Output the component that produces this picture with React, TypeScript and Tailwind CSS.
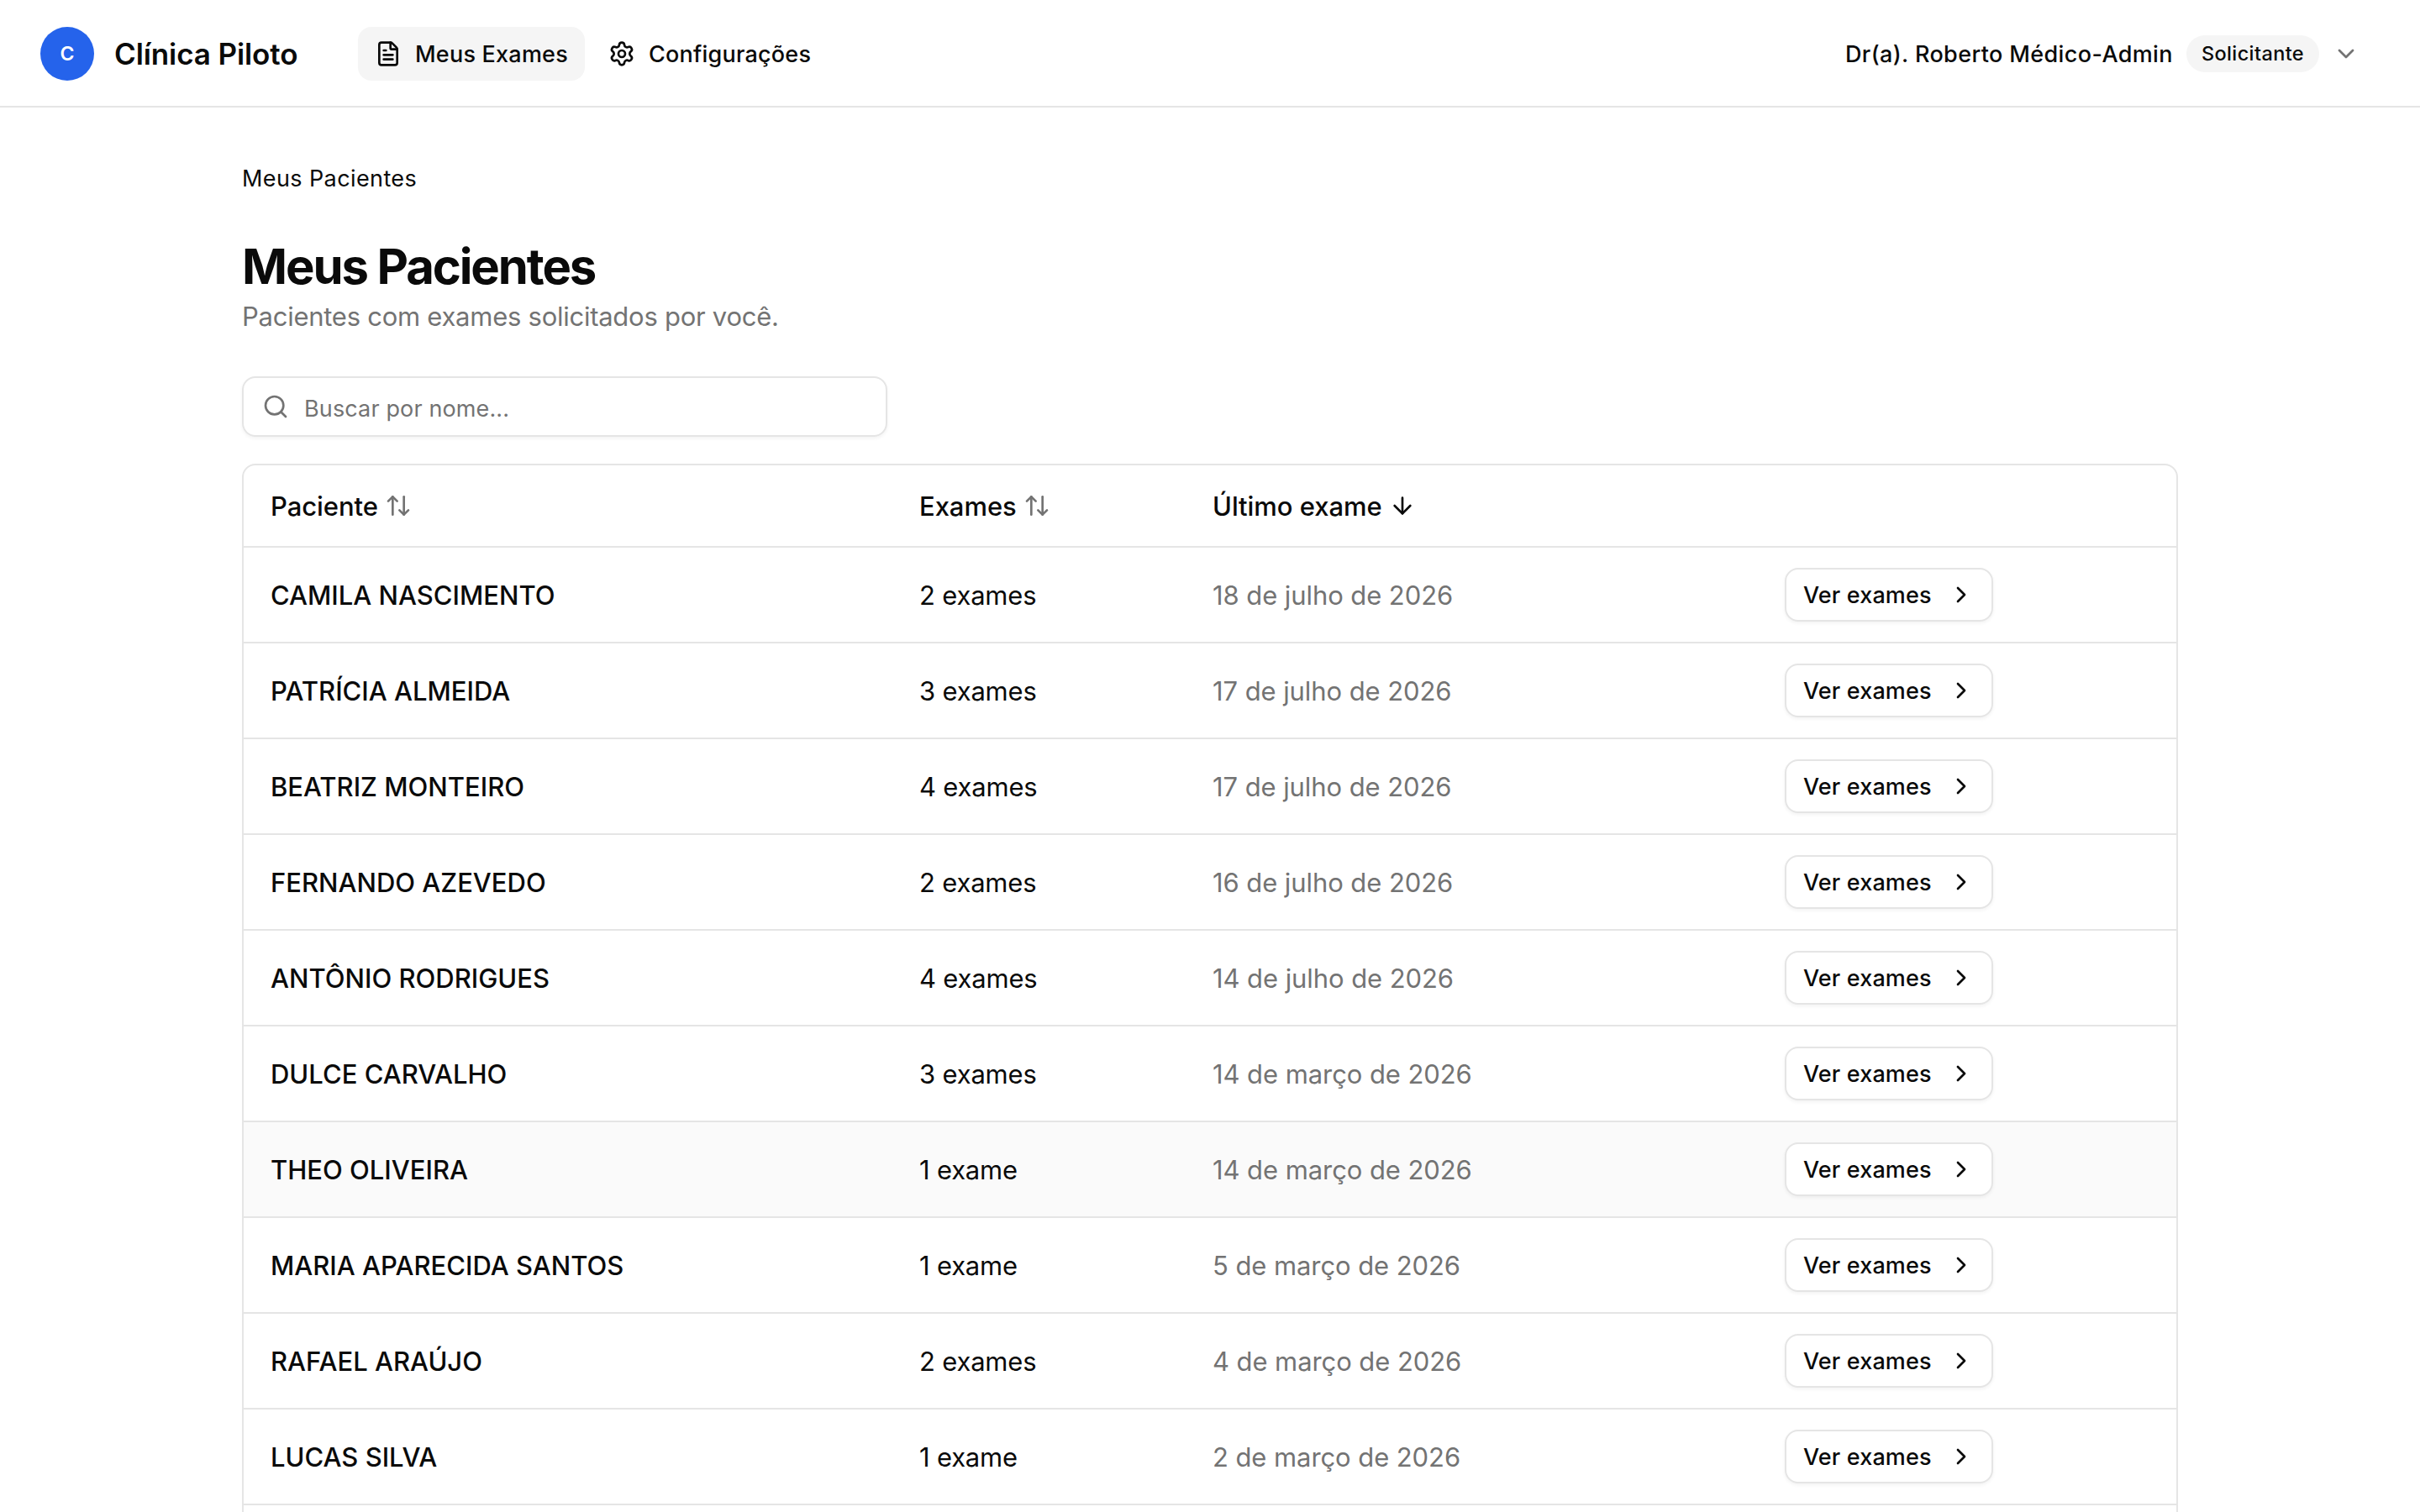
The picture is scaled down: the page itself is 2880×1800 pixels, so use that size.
import type React from "react"
import { ArrowDown, ArrowUpDown, ChevronDown, ChevronRight, FileText, Search, Settings } from "lucide-react"

interface Patient {
  name: string
  exams: number
  lastExam: string
  active?: boolean
}

const patients: Patient[] = [
  { name: "CAMILA NASCIMENTO", exams: 2, lastExam: "18 de julho de 2026" },
  { name: "PATRÍCIA ALMEIDA", exams: 3, lastExam: "17 de julho de 2026" },
  { name: "BEATRIZ MONTEIRO", exams: 4, lastExam: "17 de julho de 2026" },
  { name: "FERNANDO AZEVEDO", exams: 2, lastExam: "16 de julho de 2026" },
  { name: "ANTÔNIO RODRIGUES", exams: 4, lastExam: "14 de julho de 2026" },
  { name: "DULCE CARVALHO", exams: 3, lastExam: "14 de março de 2026" },
  { name: "THEO OLIVEIRA", exams: 1, lastExam: "14 de março de 2026", active: true },
  { name: "MARIA APARECIDA SANTOS", exams: 1, lastExam: "5 de março de 2026" },
  { name: "RAFAEL ARAÚJO", exams: 2, lastExam: "4 de março de 2026" },
  { name: "LUCAS SILVA", exams: 1, lastExam: "2 de março de 2026" },
]

interface NavItemProps {
  icon: React.ReactNode
  label: string
  active?: boolean
}

function NavItem({ icon, label, active }: NavItemProps) {
  return (
    <a
      className={`flex h-16 items-center gap-4 rounded-2xl px-5 text-[27px] font-medium tracking-[0.22px] ${active ? "bg-neutral-100" : ""}`}
    >
      {icon}
      <span className="pt-0.5">{label}</span>
    </a>
  )
}

function SortableHead({ label, icon }: { label: string; icon: React.ReactNode }) {
  return (
    <th className="pl-8 font-medium">
      <div className="flex items-center gap-2">
        <span className="pt-0.5 tracking-[-0.05px]">{label}</span>
        {icon}
      </div>
    </th>
  )
}

function Header() {
  return (
    <header className="flex h-32 items-center justify-between border-b-2 border-neutral-200 pt-0.5 pl-12 pr-[72px]">
      <div className="flex items-center">
        <div className="flex size-16 items-center justify-center rounded-full bg-[#2563eb] text-[23px] font-semibold text-white">
          C
        </div>
        <span className="ml-6 w-[290px] text-[35px] font-semibold tracking-[-0.1px]">Clínica Piloto</span>
        <nav className="flex gap-2">
          <NavItem icon={<FileText size={32} />} label="Meus Exames" active />
          <NavItem icon={<Settings size={32} />} label="Configurações" />
        </nav>
      </div>
      <div className="flex items-center gap-4">
        <span className="pt-0.5 text-[27px] font-medium tracking-[0.38px]">Dr(a). Roberto Médico-Admin</span>
        <span className="flex h-11 items-center rounded-full bg-neutral-100 px-[18px] text-[23.5px] font-medium tracking-[0.38px]">
          Solicitante
        </span>
        <ChevronDown size={32} className="text-neutral-500" />
      </div>
    </header>
  )
}

function PatientRow({ patient }: { patient: Patient }) {
  return (
    <tr className={`h-[114px] border-b-2 border-neutral-200 ${patient.active ? "bg-neutral-50" : ""}`}>
      <td className="pt-0.5 pl-8 font-medium">{patient.name}</td>
      <td className="pt-0.5 pl-8 tracking-[-0.2px]">
        {patient.exams} {patient.exams === 1 ? "exame" : "exames"}
      </td>
      <td className="pt-0.5 pl-8 tracking-[-0.08px] text-neutral-500">{patient.lastExam}</td>
      <td className="pl-8">
        <button className="flex h-16 items-center gap-[19px] rounded-2xl border-2 border-neutral-200 bg-white px-5 text-[27px] font-medium tracking-[0.15px] shadow-[0_2px_4px_rgba(0,0,0,0.05)]">
          <span className="pt-0.5">Ver exames</span>
          <ChevronRight size={32} />
        </button>
      </td>
    </tr>
  )
}

export default function App() {
  return (
    <div className="h-[1800px] overflow-hidden bg-white font-[Inter,sans-serif] text-neutral-950">
      <Header />
      <main className="mx-auto w-[2304px] pt-[65px]">
        <p className="text-[27px] leading-10 tracking-[0.4px]">Meus Pacientes</p>
        <h1 className="mt-12 text-[58px] leading-[72px] font-bold tracking-[-2.1px]">Meus Pacientes</h1>
        <p className="text-[31px] leading-[48px] tracking-[-0.26px] text-neutral-500">
          Pacientes com exames solicitados por você.
        </p>
        <div className="mt-[47px] flex h-18 w-[768px] items-center gap-[18px] rounded-2xl border-2 border-neutral-200 px-[22px] shadow-[0_2px_4px_rgba(0,0,0,0.05)]">
          <Search size={32} className="text-neutral-500" />
          <span className="pt-1.5 text-[27px] tracking-[0.13px] text-neutral-500">Buscar por nome...</span>
        </div>
        <div className="mt-8 overflow-hidden rounded-2xl border-2 border-neutral-200">
          <table className="w-full table-fixed text-[31px]">
            <colgroup>
              <col className="w-[772px]" />
              <col className="w-[349px]" />
              <col className="w-[681px]" />
              <col />
            </colgroup>
            <thead>
              <tr className="h-[97px] border-b-2 border-neutral-200 text-left">
                <SortableHead label="Paciente" icon={<ArrowUpDown size={32} className="text-neutral-500" />} />
                <SortableHead label="Exames" icon={<ArrowUpDown size={32} className="text-neutral-500" />} />
                <SortableHead label="Último exame" icon={<ArrowDown size={32} />} />
                <th />
              </tr>
            </thead>
            <tbody>
              {patients.map((patient) => (
                <PatientRow key={patient.name} patient={patient} />
              ))}
              <tr className="h-[114px]" />
            </tbody>
          </table>
        </div>
      </main>
    </div>
  )
}
